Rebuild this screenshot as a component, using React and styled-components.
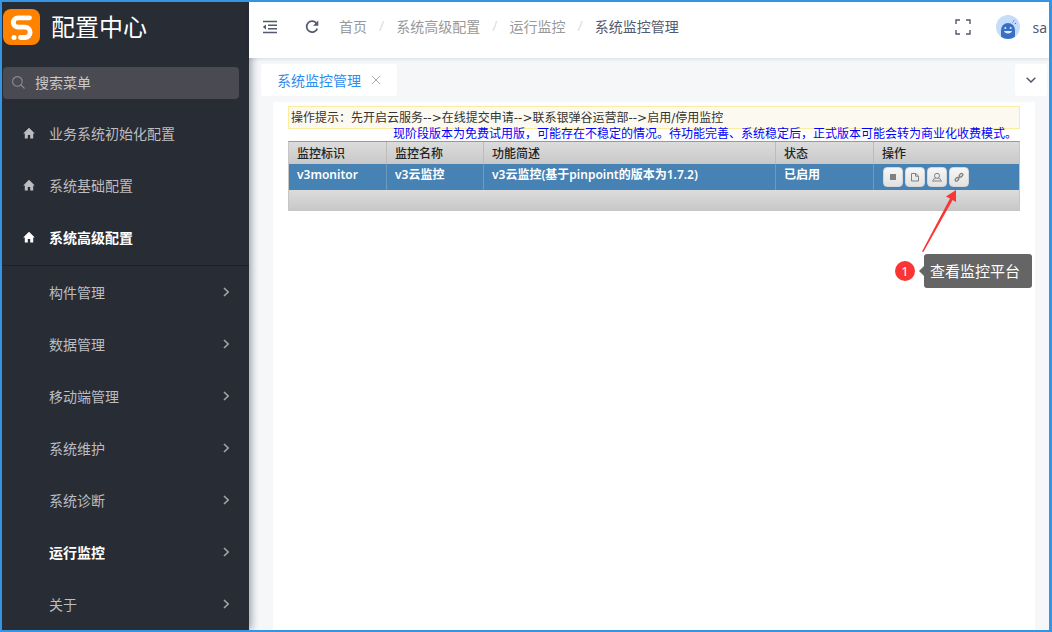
import React from 'react'
import styled, { createGlobalStyle } from 'styled-components'

const GlobalStyle = createGlobalStyle`
  * {
    box-sizing: border-box;
  }

  body {
    margin: 0;
    font-family: "Noto Sans", "Noto Sans CJK SC", sans-serif;
    font-size: 14px;
    color: #515a6e;
  }

  button, input {
    font-family: inherit;
  }

  button {
    padding: 0;
    border: 0;
    background: none;
    color: inherit;
    cursor: pointer;
  }

  svg {
    display: block;
    flex: none;
  }
`;

const Frame = styled.div`
  display: flex;
  height: 100vh;
  overflow: hidden;
  border: 2px solid #3595e5;
  border-right-width: 3px;
  background: #f5f7f9;
`;

const Sidebar = styled.aside`
  flex: none;
  width: 247px;
  overflow: hidden;
  background: #282c34;
  box-shadow: 2px 0 8px rgba(0, 21, 41, 0.4);
  z-index: 1;
`;

const Brand = styled.div`
  display: flex;
  align-items: center;
  gap: 11px;
  height: 50px;
  padding-left: 1px;
`;

const BrandName = styled.h1`
  margin: 0;
  color: #fff;
  font-size: 24px;
  font-weight: 400;
  line-height: 32px;
`;

const Search = styled.label`
  display: flex;
  align-items: center;
  gap: 10px;
  height: 32px;
  margin: 15px 10px 8px 1px;
  padding: 0 9px 1px;
  border-radius: 4px;
  background: #4a4a52;
  color: #888d98;

  input {
    flex: 1;
    min-width: 0;
    padding: 0;
    border: 0;
    outline: 0;
    background: transparent;
    color: #c8c9cc;
    font-size: 14px;
  }

  input::placeholder {
    color: #c8c9cc;
    opacity: 1;
  }
`;

const Menu = styled.nav`
  display: flex;
  flex-direction: column;
`;

const SubMenu = styled(Menu)`
  margin-top: 2px;
  border-top: 1px solid #1b1f29;
`;

const MenuItem = styled.a`
  display: flex;
  align-items: center;
  flex: none;
  gap: 14px;
  height: 52px;
  padding: 0 19px 0 ${props => (props.$nested ? '47px' : '21px')};
  color: ${props => (props.$active ? '#fff' : '#bcbdc0')};
  font-size: 14px;
  font-weight: ${props => (props.$active ? 700 : 400)};
  text-decoration: none;

  span {
    flex: 1;
  }
`;

const Main = styled.div`
  display: flex;
  flex: 1;
  flex-direction: column;
  min-width: 0;
`;

const TopBar = styled.header`
  display: flex;
  align-items: center;
  flex: none;
  height: 56px;
  padding: 0 2px 6px 12px;
  background: #fff;
  box-shadow: 0 1px 4px rgba(0, 21, 41, 0.12);
  z-index: 2;
`;

const IconButton = styled.button`
  display: flex;
  align-items: center;
  justify-content: center;
  width: 18px;
  height: 18px;
  margin-right: ${props => props.$gap || 0}px;
`;

const Breadcrumb = styled.nav`
  display: flex;
  flex: 1;
  gap: 12px;
  padding-bottom: 2px;
  color: #dcdee2;
  white-space: nowrap;

  a {
    color: #999;
    text-decoration: none;
  }

  a[aria-current] {
    color: #515a6e;
  }
`;

const User = styled.button`
  display: flex;
  align-items: center;
  gap: 12px;
  font-size: 14px;
`;

const TabBar = styled.div`
  display: flex;
  flex: none;
  align-items: center;
  justify-content: space-between;
  padding: 6px 2px 6px 12px;
`;

const Tab = styled.div`
  display: flex;
  align-items: center;
  gap: 10px;
  height: 32px;
  padding: 0 16px 1px;
  border-radius: 3px;
  background: #fff;
  color: #2d8cf0;

  button {
    color: #aaa;
  }
`;

const TabMenu = styled.button`
  display: flex;
  align-items: center;
  justify-content: center;
  width: 32px;
  height: 32px;
  border-radius: 3px;
  background: #fff;
`;

const Panel = styled.main`
  flex: 1;
  margin: 0 14px 0 24px;
  padding: 4px 15px;
  background: #fff;
  font-size: 12px;
`;

const Hint = styled.p`
  margin: 0;
  padding: 2px 2px 0;
  border: 1px solid #fbec9f;
  background: #fcfaf0;
  color: #333;
  font-family: "DejaVu Sans", "Noto Sans CJK SC", sans-serif;
  line-height: 19px;
`;

const Notice = styled.p`
  margin: 0 0 2px;
  padding-right: 3px;
  color: #00f;
  line-height: 10px;
  text-align: right;
`;

const Grid = styled.table`
  width: 100%;
  border-collapse: separate;
  border-spacing: 0;
  border: 1px solid #c6c6c6;
  border-top-color: #999;
  table-layout: fixed;

  th {
    height: 22px;
    padding: 2px 8px 0;
    border-right: 1px solid #bcbcbc;
    background: linear-gradient(#dcdcdc, #c8c8c8);
    color: #222;
    font-weight: 500;
    line-height: 18px;
    text-align: left;
  }

  tbody td {
    height: 26px;
    padding: 1px 8px 0;
    border-right: 1px solid #6c9bc2;
    background: #4682b4;
    color: #fff;
    font-weight: 600;
    line-height: 20px;
    vertical-align: top;
  }

  th:last-child, tbody td:last-child {
    border-right: 0;
  }

  tfoot td {
    height: 20px;
    padding: 0;
    background: linear-gradient(#dcdcdc, #c8c8c8);
  }
`;

const Column = styled.col`
  width: ${props => props.$width};
`;

const Actions = styled.div`
  display: flex;
  gap: 2px;
  padding: 2px 1px;
`;

const ActionSlot = styled.div`
  position: relative;
`;

const ActionButton = styled.button`
  display: flex;
  align-items: center;
  justify-content: center;
  width: 20px;
  height: 20px;
  border: 1px solid #d5d5d5;
  border-radius: 4px;
  background: linear-gradient(#f6f6f6, #e2e2e2);
  color: #808080;
`;

const Pointer = styled.svg`
  position: absolute;
  top: 22px;
  left: -29px;
`;

const Step = styled.span`
  position: absolute;
  top: 94px;
  left: -54px;
  width: 20px;
  border-radius: 50%;
  background: #fa3534;
  color: #fff;
  font-size: 13px;
  font-weight: 400;
  line-height: 20px;
  text-align: center;
`;

const Tooltip = styled.div`
  position: absolute;
  top: 87px;
  left: -25px;
  width: 108px;
  padding-left: 6px;
  border-radius: 3px;
  background: #656565;
  color: #fff;
  font-size: 15px;
  font-weight: 400;
  line-height: 34px;
  white-space: nowrap;

  &::before {
    content: '';
    position: absolute;
    top: 12px;
    left: -5px;
    border: 5px solid transparent;
    border-left: 0;
    border-right-color: #656565;
  }
`;

const Logo = () => (
  <svg width="37" height="36" viewBox="0 0 37 36">
    <rect width="37" height="36" rx="8" fill="#ff8200" />
    <path d="M26.5 8.8H15a4.7 4.7 0 0 0 0 9.4h7a5.1 5.1 0 0 1 0 10.3h-4.5" fill="none" stroke="#fff" strokeWidth="4.8" strokeLinecap="round" />
    <circle cx="11" cy="28.6" r="2.5" fill="#fff" />
  </svg>
)

const SearchIcon = () => (
  <svg width="13" height="13" viewBox="0 0 13 13" fill="none" stroke="currentColor" strokeWidth="1.1">
    <circle cx="5.4" cy="5.4" r="4.8" />
    <path d="M9 9l3.5 3.5" />
  </svg>
)

const HomeIcon = () => (
  <svg width="12" height="12" viewBox="0 0 12 12" fill="currentColor">
    <path d="M6 .8L.2 6.5h1.600v5h3V7.900h2.400v3.600h3v-5h1.600z" />
  </svg>
)

const Chevron = () => (
  <svg width="7" height="10" viewBox="0 0 7 10" fill="none" stroke="#a5a6a9" strokeWidth="1.6">
    <path d="M1 1l4.2 4L1 9" />
  </svg>
)

const FoldIcon = () => (
  <svg width="16" height="14" viewBox="0 0 16 14" fill="none" stroke="currentColor" strokeWidth="1.4">
    <path d="M1 1.5h14M6 5.2h9M6 8.8h9M1 12.5h14" />
    <path d="M4 4.5v5L.8 7z" fill="currentColor" stroke="none" />
  </svg>
)

const ReloadIcon = () => (
  <svg width="14" height="14" viewBox="0 0 14 14" fill="none" stroke="currentColor" strokeWidth="1.7">
    <path d="M11.6 3.4A5.5 5.5 0 1 0 12.3 8.6" />
    <path d="M13.3.6v5.2H8.1z" fill="currentColor" stroke="none" />
  </svg>
)

const FullscreenIcon = () => (
  <svg width="16" height="16" viewBox="0 0 16 16" fill="none" stroke="currentColor" strokeWidth="1.4">
    <path d="M1 5V1h4M11 1h4v4M15 11v4h-4M5 15H1v-4" />
  </svg>
)

const Avatar = () => (
  <svg width="24" height="24" viewBox="0 0 24 24">
    <circle cx="12" cy="12" r="12" fill="#c5dcfb" />
    <path d="M5 15a7 7 0 0 1 14 0v6.7a12 12 0 0 1-14 0z" fill="#3a70c4" />
    <circle cx="9.3" cy="13" r="1" fill="#dce9fc" />
    <circle cx="14.7" cy="13" r="1" fill="#dce9fc" />
    <path d="M8 16h8c-.4 3.2-7.6 3.2-8 0z" fill="#dce9fc" />
    <path d="M16.5 7.5l1-1M18.8 8.7l1.3-.5M17.8 5.6l.6-.8" stroke="#3a70c4" strokeWidth="1" />
  </svg>
)

const CloseIcon = () => (
  <svg width="10" height="10" viewBox="0 0 10 10" stroke="currentColor" strokeWidth="1">
    <path d="M.8.8l8.4 8.4M9.2.8L.8 9.2" />
  </svg>
)

const DownIcon = () => (
  <svg width="10" height="6" viewBox="0 0 10 6" fill="none" stroke="currentColor" strokeWidth="1.5">
    <path d="M.7.7L5 5 9.3.7" />
  </svg>
)

const StopIcon = () => (
  <svg width="6" height="6" viewBox="0 0 6 6">
    <rect width="6" height="6" fill="currentColor" />
  </svg>
)

const FileIcon = () => (
  <svg width="10" height="10" viewBox="0 0 10 10" fill="none" stroke="currentColor" strokeWidth="1">
    <path d="M1.5 1.500h4.300l2.700 2.500v5h-7zM5.500 1.500v2.700h3" />
  </svg>
)

const UserIcon = () => (
  <svg width="10" height="10" viewBox="0 0 10 10" fill="none" stroke="currentColor" strokeWidth="1">
    <circle cx="5" cy="3.8" r="2.5" />
    <path d="M3.6 6.200L1 7.600M6.400 6.200L9 7.600M0 9h10" />
  </svg>
)

const LinkIcon = () => (
  <svg width="10" height="10" viewBox="0 0 10 10" fill="none" stroke="currentColor" strokeWidth="1.3">
    <rect x="-2.1" y="-1.3" width="4.2" height="2.6" rx="1.3" transform="translate(7 3.2) rotate(-45)" />
    <rect x="-2.1" y="-1.3" width="4.2" height="2.6" rx="1.3" transform="translate(3 7.2) rotate(-45)" />
    <path d="M3.7 6.5l2.6-2.600" />
  </svg>
)

const topMenu = [
  { label: '业务系统初始化配置' },
  { label: '系统基础配置' },
  { label: '系统高级配置', active: true },
]

const subMenu = [
  { label: '构件管理' },
  { label: '数据管理' },
  { label: '移动端管理' },
  { label: '系统维护' },
  { label: '系统诊断' },
  { label: '运行监控', active: true },
  { label: '关于' },
]

const crumbs = ['首页', '系统高级配置', '运行监控', '系统监控管理']

const actions = [
  { label: '停用', Icon: StopIcon },
  { label: '申请', Icon: FileIcon },
  { label: '联系', Icon: UserIcon },
]

const App = () => (
  <>
    <GlobalStyle />
    <Frame>
      <Sidebar>
        <Brand>
          <Logo />
          <BrandName>配置中心</BrandName>
        </Brand>
        <Search>
          <SearchIcon />
          <input type="text" placeholder="搜索菜单" aria-label="搜索菜单" />
        </Search>
        <Menu>
          {topMenu.map(item => (
            <MenuItem key={item.label} href="#" $active={item.active}>
              <HomeIcon />
              <span>{item.label}</span>
            </MenuItem>
          ))}
        </Menu>
        <SubMenu>
          {subMenu.map(item => (
            <MenuItem key={item.label} href="#" $nested $active={item.active}>
              <span>{item.label}</span>
              <Chevron />
            </MenuItem>
          ))}
        </SubMenu>
      </Sidebar>

      <Main>
        <TopBar>
          <IconButton aria-label="收起菜单" $gap={24}><FoldIcon /></IconButton>
          <IconButton aria-label="刷新" $gap={18}><ReloadIcon /></IconButton>
          <Breadcrumb>
            {crumbs.map((crumb, i) => (
              <React.Fragment key={crumb}>
                {i > 0 && <span>/</span>}
                <a href="#" aria-current={i === crumbs.length - 1 ? 'page' : undefined}>{crumb}</a>
              </React.Fragment>
            ))}
          </Breadcrumb>
          <IconButton aria-label="全屏" $gap={24}><FullscreenIcon /></IconButton>
          <User>
            <Avatar />
            <span>sa</span>
          </User>
        </TopBar>

        <TabBar>
          <Tab>
            <span>系统监控管理</span>
            <button aria-label="关闭"><CloseIcon /></button>
          </Tab>
          <TabMenu aria-label="更多"><DownIcon /></TabMenu>
        </TabBar>

        <Panel>
          <Hint>操作提示：先开启云服务--&gt;在线提交申请--&gt;联系银弹谷运营部--&gt;启用/停用监控</Hint>
          <Notice>现阶段版本为免费试用版，可能存在不稳定的情况。待功能完善、系统稳定后，正式版本可能会转为商业化收费模式。</Notice>
          <Grid>
            <colgroup>
              <Column $width="98px" />
              <Column $width="97px" />
              <Column $width="auto" />
              <Column $width="98px" />
              <Column $width="145px" />
            </colgroup>
            <thead>
              <tr>
                <th>监控标识</th>
                <th>监控名称</th>
                <th>功能简述</th>
                <th>状态</th>
                <th>操作</th>
              </tr>
            </thead>
            <tbody>
              <tr>
                <td>v3monitor</td>
                <td>v3云监控</td>
                <td>v3云监控(基于pinpoint的版本为1.7.2)</td>
                <td>已启用</td>
                <td>
                  <Actions>
                    {actions.map(({ label, Icon }) => (
                      <ActionButton key={label} aria-label={label}><Icon /></ActionButton>
                    ))}
                    <ActionSlot>
                      <ActionButton aria-label="查看监控平台"><LinkIcon /></ActionButton>
                      <Pointer width="38" height="64" viewBox="0 0 38 64" fill="#fa3534">
                        <path d="M2 62.500l1.400.6L32.600 11l3.400 2V1L26 7.500l4 2.100z" />
                      </Pointer>
                      <Step>1</Step>
                      <Tooltip role="tooltip">查看监控平台</Tooltip>
                    </ActionSlot>
                  </Actions>
                </td>
              </tr>
            </tbody>
            <tfoot>
              <tr>
                <td colSpan={5} />
              </tr>
            </tfoot>
          </Grid>
        </Panel>
      </Main>
    </Frame>
  </>
)

export default App
